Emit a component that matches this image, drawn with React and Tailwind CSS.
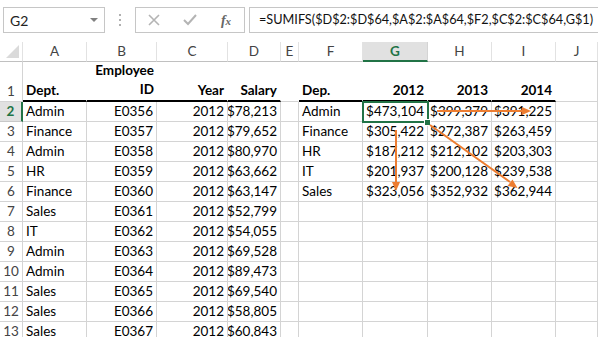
import React from "react";

const GRID =
  "grid grid-cols-[23px_64px_70px_71px_53px_18px_64px_65px_64px_64px_42px]";

const dataRows = [
  ["2", "Admin", "E0356", "2012", "$78,213", "Admin", "$473,104", "$399,379", "$391,225"],
  ["3", "Finance", "E0357", "2012", "$79,652", "Finance", "$305,422", "$272,387", "$263,459"],
  ["4", "Admin", "E0358", "2012", "$80,970", "HR", "$187,212", "$212,102", "$203,303"],
  ["5", "HR", "E0359", "2012", "$63,662", "IT", "$201,937", "$200,128", "$239,538"],
  ["6", "Finance", "E0360", "2012", "$63,147", "Sales", "$323,056", "$352,932", "$362,944"],
  ["7", "Sales", "E0361", "2012", "$52,799"],
  ["8", "IT", "E0362", "2012", "$54,055"],
  ["9", "Admin", "E0363", "2012", "$69,528"],
  ["10", "Admin", "E0364", "2012", "$89,473"],
  ["11", "Sales", "E0365", "2012", "$69,540"],
  ["12", "Sales", "E0366", "2012", "$58,805"],
  ["13", "Sales", "E0367", "2012", "$60,843"],
];

function Cell({ children, right, bold, line = "border-[#d4d4d4]", cls = "" }) {
  return (
    <div
      className={`flex items-end overflow-hidden whitespace-nowrap border-r border-b px-[3px] pb-[1px] leading-[18px] ${line} ${
        right ? "justify-end" : "justify-start"
      } ${bold ? "font-bold" : ""} ${cls}`}
    >
      {children}
    </div>
  );
}

function RowHead({ n, active }) {
  return active ? (
    <div className="flex items-end justify-center border-b border-r-2 border-b-[#c8c8c8] border-r-[#217346] bg-[#e1e1e1] pb-[1px] font-bold leading-[18px] text-[#217346]">
      {n}
    </div>
  ) : (
    <div className="flex items-end justify-center border-b border-r border-[#d4d4d4] pb-[1px] leading-[18px] text-[#444]">
      {n}
    </div>
  );
}

function ColHead({ l, active }) {
  return active ? (
    <div className="flex items-center justify-center border-r border-b-2 border-r-[#d4d4d4] border-b-[#217346] bg-[#e1e1e1] font-bold text-[#217346]">
      {l}
    </div>
  ) : (
    <div className="flex items-center justify-center border-r border-b border-r-[#e2e2e2] border-b-[#c0c0c0] text-[#444]">
      {l}
    </div>
  );
}

function FormulaBar() {
  return (
    <div className="flex h-[42px] items-start bg-white pt-[7px]">
      <div className="ml-[3px] flex h-[26px] w-[102px] items-center justify-between border border-[#c6c6c6] pl-[6px] pr-[6px] text-[14px] text-[#222]">
        <span>G2</span>
        <svg width="8" height="5" viewBox="0 0 8 5">
          <path d="M0 0 L8 0 L4 4 Z" fill="#808080" />
        </svg>
      </div>
      <div className="flex h-[26px] w-[30px] flex-col items-center justify-center gap-[3px]">
        <span className="block h-[2px] w-[2px] bg-[#b0b0b0]" />
        <span className="block h-[2px] w-[2px] bg-[#b0b0b0]" />
        <span className="block h-[2px] w-[2px] bg-[#b0b0b0]" />
      </div>
      <div className="flex h-[26px] w-[110px] items-center border border-[#c6c6c6]">
        <div className="flex w-[36px] justify-center">
          <svg width="12" height="12" viewBox="0 0 12 12">
            <path d="M1 1 L11 11 M11 1 L1 11" stroke="#b4b4b4" strokeWidth="1.6" />
          </svg>
        </div>
        <div className="flex w-[36px] justify-center">
          <svg width="14" height="12" viewBox="0 0 14 12">
            <path d="M1 6 L5 10 L13 1" stroke="#b4b4b4" strokeWidth="2" fill="none" />
          </svg>
        </div>
        <div className="flex w-[36px] justify-center font-[family-name:'Liberation_Serif',serif] text-[14px] font-bold italic text-[#666]">
          <span>
            f<span className="text-[11px]">x</span>
          </span>
        </div>
      </div>
      <div className="ml-[4px] flex h-[26px] flex-1 items-center overflow-hidden whitespace-nowrap border-y border-l border-[#c6c6c6] pl-[9px] text-[12.7px] text-[#111]">
        =SUMIFS($D$2:$D$64,$A$2:$A$64,$F2,$C$2:$C$64,G$1)
      </div>
    </div>
  );
}

function Overlay() {
  const o = "#ED7D31";
  return (
    <svg
      className="pointer-events-none absolute left-0 top-0"
      width="598"
      height="337"
      viewBox="0 0 598 337"
    >
      <rect x="363" y="102" width="65" height="20" fill="none" stroke="#217346" strokeWidth="2" />
      <rect x="424.5" y="119.5" width="6" height="6" fill="#217346" stroke="#fff" strokeWidth="1" />
      <line x1="437" y1="111" x2="523" y2="111" stroke={o} strokeWidth="2" />
      <path d="M522 107 L531 111 L522 115 Z" fill={o} />
      <line x1="396" y1="130" x2="396" y2="183" stroke={o} strokeWidth="2" />
      <path d="M392 182 L396 191 L400 182 Z" fill={o} />
      <line x1="430" y1="125" x2="510" y2="182" stroke={o} strokeWidth="2" />
      <path d="M507.5 186 L517.5 188 L512.5 179.5 Z" fill={o} />
    </svg>
  );
}

export default function App() {
  const letters = ["A", "B", "C", "D", "E", "F", "G", "H", "I", "J"];
  return (
    <div className="relative h-[337px] w-[598px] overflow-hidden bg-white font-[family-name:'Lato',sans-serif] text-[13.5px] text-black">
      <FormulaBar />
      <div className={`${GRID} grid-rows-[20px_40px_20px_20px_20px_20px_20px_20px_20px_20px_20px_20px_20px_20px]`}>
        <div className="relative border-r border-b border-r-[#e2e2e2] border-b-[#c0c0c0]">
          <svg className="absolute bottom-[3px] right-[3px]" width="13" height="13" viewBox="0 0 13 13">
            <path d="M13 0 L13 13 L0 13 Z" fill="#dadada" />
          </svg>
        </div>
        {letters.map((l) => (
          <ColHead key={l} l={l} active={l === "G"} />
        ))}

        <RowHead n="1" />
        <Cell bold line="border-r-transparent border-b-black" cls="border-b-2">
          Dept.
        </Cell>
        <div className="flex flex-col items-end justify-end border-b-2 border-black px-[3px] pb-[1px] text-right font-bold leading-[19px]">
          <span>Employee</span>
          <span>ID</span>
        </div>
        <Cell bold right line="border-r-transparent border-b-black" cls="border-b-2">
          Year
        </Cell>
        <Cell bold right line="border-r-transparent border-b-black" cls="border-b-2">
          Salary
        </Cell>
        <Cell line="border-r-transparent border-b-[#d4d4d4]" />
        <Cell bold line="border-r-transparent border-b-black" cls="border-b-2">
          Dep.
        </Cell>
        <Cell bold right line="border-r-transparent border-b-black" cls="border-b-2">
          2012
        </Cell>
        <Cell bold right line="border-r-transparent border-b-black" cls="border-b-2">
          2013
        </Cell>
        <Cell bold right line="border-r-transparent border-b-black" cls="border-b-2">
          2014
        </Cell>
        <Cell />

        {dataRows.map((r) => (
          <React.Fragment key={r[0]}>
            <RowHead n={r[0]} active={r[0] === "2"} />
            <Cell>{r[1]}</Cell>
            <Cell right>{r[2]}</Cell>
            <Cell right>{r[3]}</Cell>
            <Cell right>{r[4]}</Cell>
            <Cell />
            <Cell>{r[5] || ""}</Cell>
            <Cell right>{r[6] || ""}</Cell>
            <Cell right>{r[7] || ""}</Cell>
            <Cell right>{r[8] || ""}</Cell>
            <Cell />
          </React.Fragment>
        ))}
      </div>
      <Overlay />
    </div>
  );
}
